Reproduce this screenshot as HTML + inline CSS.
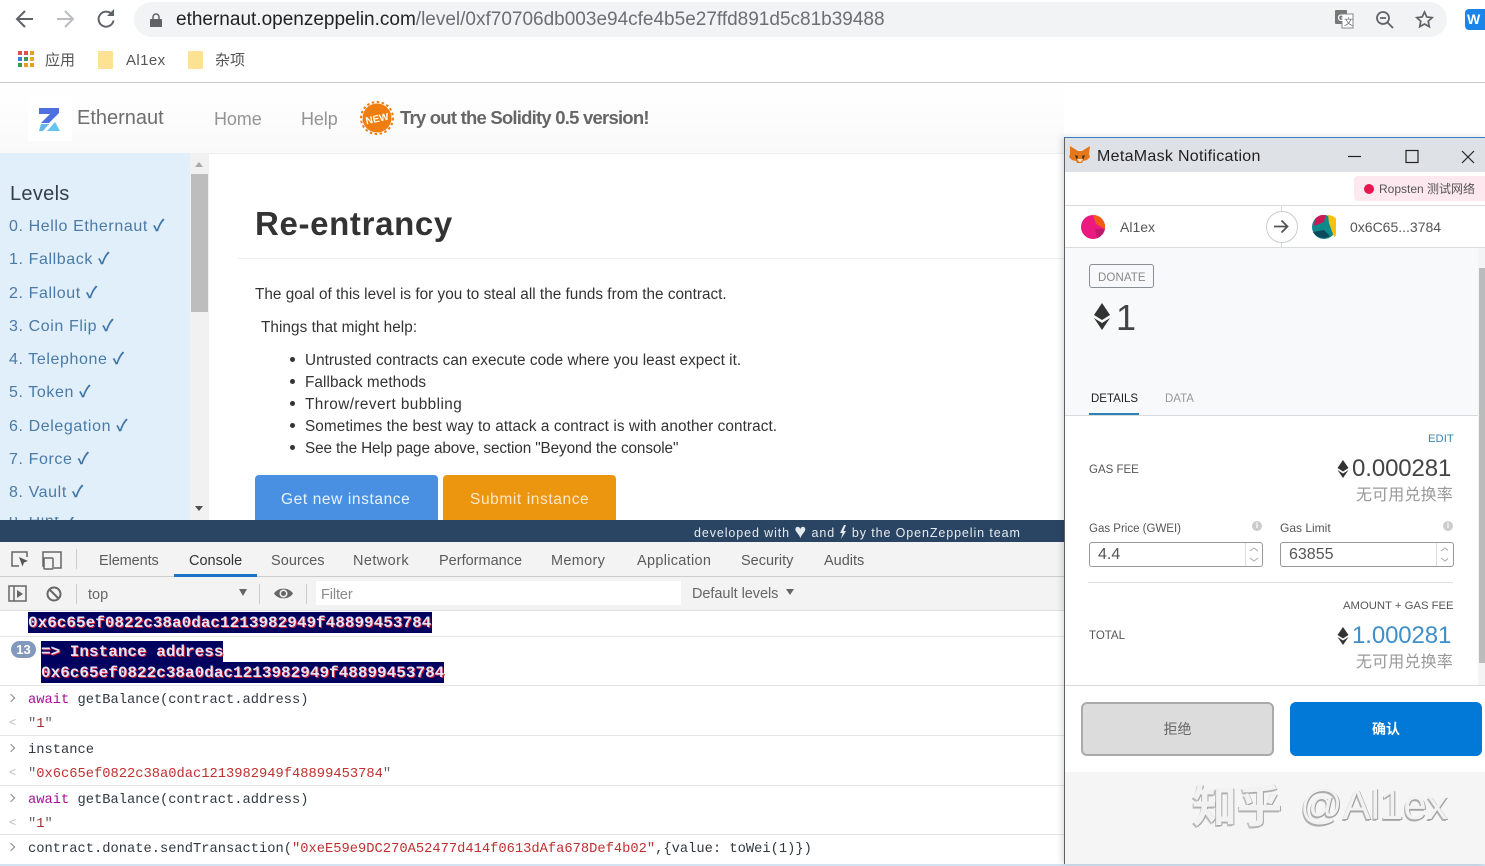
<!DOCTYPE html>
<html><head><meta charset="utf-8"><style>
html,body{margin:0;padding:0;width:1485px;height:866px;overflow:hidden;background:#fff}
body{position:relative;font-family:"Liberation Sans","Noto Sans CJK SC",sans-serif;color:#333}
.a,.t{position:absolute}
.t{white-space:nowrap;line-height:20px}
.m{font-family:"Liberation Mono","DejaVu Sans Mono",monospace;font-size:13.75px;color:#303942}
.lv{left:9px;font-size:16px;color:#4a7aa6;letter-spacing:.6px}
.lv i{font-style:normal;font-weight:bold;color:#3f74a6}
.b{left:255px;font-size:15.3px;color:#333;letter-spacing:.02px}
.tab{top:551px;font-size:14.5px;color:#5a5a5a}
.hl{background:#00005f;color:#e4e4f6;font-weight:bold;text-shadow:1px 1px 0 #d0203a;font-family:"Liberation Mono",monospace;font-size:16px;line-height:23px;height:21px;white-space:nowrap;position:absolute}
.line{position:absolute;height:1px;background:#e6e6e6;left:0;width:1064px}
.mm{font-size:11.5px;color:#555}
.ch{position:absolute;left:8px;width:5px;height:5px;border-top:1.5px solid #888;border-right:1.5px solid #888;transform:rotate(45deg)}
.bk{position:absolute;left:9px;font-size:12px;line-height:12px;color:#bbb;font-family:"Liberation Mono",monospace}
.inf{position:absolute;width:10px;height:10px;border-radius:5px;background:#ccc;color:#fff;font-size:8px;line-height:10px;text-align:center;font-weight:bold}
</style></head><body>

<!-- Chrome toolbar -->
<svg class="a" style="left:14px;top:8px" width="110" height="24" fill="none" stroke="#5f6368" stroke-width="2"><path d="M19 11H4M11 3l-8 8 8 8"/><path d="M43 11h15M51 3l8 8-8 8" stroke="#b9bcc0"/><path d="M98 6.500a7.500 7.500 0 1 0 1.500 6"/><path d="M93 8h7V1z" stroke="none" fill="#5f6368"/></svg>
<div class="a" style="left:134px;top:2px;width:1313px;height:35px;border-radius:18px;background:#f1f3f4"></div>
<svg class="a" style="left:149px;top:12px" width="14" height="16"><path d="M2 7h10a1 1 0 0 1 1 1v7H1V8a1 1 0 0 1 1-1z" fill="#5f6368"/><path d="M4 7V5a3 3 0 0 1 6 0v2" fill="none" stroke="#5f6368" stroke-width="1.5"/></svg>
<div class="t" style="left:176px;top:10px;font-size:19px;color:#222">ethernaut.openzeppelin.com<span style="color:#6b6f73">/level/0xf70706db003e94cfe4b5e27ffd891d5c81b39488</span></div>
<svg class="a" style="left:1334px;top:9px" width="22" height="22"><rect x="1" y="1" width="12" height="14" fill="#777" rx="1"/><rect x="8" y="5" width="11" height="14" fill="#fff" stroke="#888"/><text x="3.500" y="12" font-size="9" font-weight="bold" fill="#fff" font-family="Liberation Sans">G</text><text x="10" y="16" font-size="9" fill="#666" font-family="Noto Sans CJK SC">文</text></svg>
<svg class="a" style="left:1375px;top:10px" width="20" height="20" fill="none" stroke="#5f6368" stroke-width="1.8"><circle cx="8" cy="8" r="6"/><path d="M5 8h6M12.500 12.500l5.500 5.500"/></svg>
<svg class="a" style="left:1415px;top:10px" width="19" height="19" fill="none" stroke="#5f6368" stroke-width="1.7"><path d="M9.500 2l2.300 5 5.400.6-4 3.700 1.100 5.400-4.800-2.700-4.800 2.700 1.100-5.400-4-3.700 5.400-.6z"/></svg>
<div class="a" style="left:1465px;top:9px;width:20px;height:21px;background:#1a84e8;border-radius:4px 0 0 4px"></div>
<div class="t" style="left:1467px;top:9px;font-size:14px;font-weight:bold;color:#fff">W</div>

<!-- Bookmarks -->
<svg class="a" style="left:18px;top:51px" width="17" height="17"><g><rect x="0" y="0" width="4" height="4" fill="#d9534f"/><rect x="6" y="0" width="4" height="4" fill="#d9534f"/><rect x="12" y="0" width="4" height="4" fill="#e0a020"/><rect x="0" y="6" width="4" height="4" fill="#3c7de0"/><rect x="6" y="6" width="4" height="4" fill="#3c9a50"/><rect x="12" y="6" width="4" height="4" fill="#e0b020"/><rect x="0" y="12" width="4" height="4" fill="#3c9a50"/><rect x="6" y="12" width="4" height="4" fill="#e0a020"/><rect x="12" y="12" width="4" height="4" fill="#e0a020"/></g></svg>
<div class="t" style="left:45px;top:51px;font-size:15px;color:#555">应用</div>
<div class="a" style="left:98px;top:51px;width:15px;height:18px;background:#fde293;border-radius:1px"></div>
<div class="t" style="left:126px;top:51px;font-size:15px;color:#555;letter-spacing:.4px">Al1ex</div>
<div class="a" style="left:188px;top:51px;width:15px;height:18px;background:#fde293;border-radius:1px"></div>
<div class="t" style="left:215px;top:51px;font-size:15px;color:#555">杂项</div>
<div class="a" style="left:0;top:82px;width:1485px;height:1px;background:#c8c8c8"></div>

<!-- Page header -->
<div class="a" style="left:0;top:83px;width:1064px;height:70px;background:linear-gradient(#fff,#f9f9f9);border-bottom:1px solid #eee"></div>
<div class="a" style="left:28px;top:97px;width:44px;height:44px;background:#fff"></div>
<svg class="a" style="left:38px;top:107px" width="24" height="25"><path d="M1 1h20v5L11 16H3l9-9H1z" fill="#4e6fe0"/><path d="M3 17h8l-6 7H1z" fill="#63b7ef"/><path d="M9 24l8-9 5 9z" fill="#63c5ee"/></svg>
<div class="t" style="left:77px;top:108px;font-size:20px;color:#6e6e6e;letter-spacing:0">Ethernaut</div>
<div class="t" style="left:214px;top:109px;font-size:18px;color:#949494;letter-spacing:-.1px">Home</div>
<div class="t" style="left:301px;top:109px;font-size:18px;color:#949494;letter-spacing:-.1px">Help</div>
<svg class="a" style="left:360px;top:101px" width="34" height="34"><circle cx="17" cy="17" r="14.500" fill="#ef7d0f"/><circle cx="17" cy="17" r="16" fill="none" stroke="#ef7d0f" stroke-width="2" stroke-dasharray="2.500 2.500"/><text x="17" y="21" transform="rotate(-12 17 17)" text-anchor="middle" font-size="10" font-weight="bold" fill="#ffe" font-family="Liberation Sans">NEW</text></svg>
<div class="t" style="left:400px;top:108px;font-size:18.5px;font-weight:bold;color:#666;letter-spacing:-.78px">Try out the Solidity 0.5 version!</div>

<!-- Sidebar -->
<div class="a" style="left:0;top:153px;width:190px;height:367px;background:#e1effa"></div>
<div class="a" style="left:190px;top:153px;width:19px;height:367px;background:#f1f1f1"></div>
<div class="a" style="left:191px;top:174px;width:17px;height:138px;background:#bdbdbd"></div>
<div class="a" style="left:195px;top:162px;border:4.500px solid transparent;border-bottom:5px solid #aaa;border-top:0"></div>
<div class="a" style="left:195px;top:506px;border:4.500px solid transparent;border-top:5px solid #505050;border-bottom:0"></div>
<div class="t" style="left:10px;top:184px;font-size:20px;color:#34404c;letter-spacing:.3px">Levels</div>
<div class="t lv" style="top:217px">0. Hello Ethernaut <i>✓</i></div>
<div class="t lv" style="top:250px">1. Fallback <i>✓</i></div>
<div class="t lv" style="top:284px">2. Fallout <i>✓</i></div>
<div class="t lv" style="top:317px">3. Coin Flip <i>✓</i></div>
<div class="t lv" style="top:350px">4. Telephone <i>✓</i></div>
<div class="t lv" style="top:383px">5. Token <i>✓</i></div>
<div class="t lv" style="top:417px">6. Delegation <i>✓</i></div>
<div class="t lv" style="top:450px">7. Force <i>✓</i></div>
<div class="t lv" style="top:483px">8. Vault <i>✓</i></div>
<div class="t lv" style="top:517px;height:3px;overflow:hidden;line-height:10px">9. Hint <i>✓</i></div>

<!-- Main -->
<div class="t" style="left:255px;top:205px;font-size:33px;line-height:38px;font-weight:bold;color:#333;letter-spacing:.65px">Re-entrancy</div>
<div class="a" style="left:238px;top:258px;width:826px;height:1px;background:#eee"></div>
<div class="t b" style="top:285px">The goal of this level is for you to steal all the funds from the contract.</div>
<div class="t b" style="top:318px;left:261px;letter-spacing:.06px">Things that might help:</div>
<div class="a" style="left:290px;top:357px;width:5px;height:5px;border-radius:3px;background:#333;box-shadow:0 22px #333,0 44px #333,0 66px #333,0 88px #333"></div>
<div class="t b" style="top:351px;left:305px;letter-spacing:.04px">Untrusted contracts can execute code where you least expect it.</div>
<div class="t b" style="top:373px;left:305px;letter-spacing:.08px">Fallback methods</div>
<div class="t b" style="top:395px;left:305px;letter-spacing:.44px">Throw/revert bubbling</div>
<div class="t b" style="top:417px;left:305px;letter-spacing:.09px">Sometimes the best way to attack a contract is with another contract.</div>
<div class="t b" style="top:439px;left:305px;letter-spacing:-.11px">See the Help page above, section "Beyond the console"</div>
<div class="a" style="left:255px;top:475px;width:183px;height:45px;background:#4a90e2;border-radius:4px 4px 0 0"></div>
<div class="t" style="left:281px;top:490px;font-size:15.500px;color:#e8f2fc;letter-spacing:.6px">Get new instance</div>
<div class="a" style="left:443px;top:475px;width:173px;height:45px;background:#ec950f;border-radius:4px 4px 0 0"></div>
<div class="t" style="left:470px;top:490px;font-size:15.500px;color:#fde9c8;letter-spacing:.6px">Submit instance</div>

<!-- Footer bar -->
<div class="a" style="left:0;top:520px;width:1064px;height:22px;background:#2a4563"></div>
<div class="t" style="left:694px;top:523px;font-size:12.500px;color:#e6ebf0;letter-spacing:.9px">developed with <span style="font-size:20px;line-height:16px;vertical-align:-1px">♥</span> and <svg width="8" height="14" style="vertical-align:-2px"><path d="M5 0L1 8h2.500L2 14l5-8H4.500L7 0z" fill="#e6ebf0"/></svg> by the OpenZeppelin team</div>

<!-- Devtools -->
<div class="a" style="left:0;top:542px;width:1064px;height:68px;background:#f3f3f3"></div>
<div class="a" style="left:0;top:576px;width:1064px;height:1px;background:#ccc"></div>
<div class="a" style="left:0;top:610px;width:1064px;height:1px;background:#ddd"></div>
<svg class="a" style="left:10px;top:549px" width="55" height="22" fill="none" stroke="#666" stroke-width="1.500"><path d="M9 17H2V3h15v5"/><path d="M9 8l9 4-4 1.500-1.500 4z" fill="#555" stroke="none"/><path d="M34 17H33V3h18v16H44"/><rect x="34" y="9" width="9" height="11" rx="1"/></svg>
<div class="a" style="left:76px;top:549px;width:1px;height:20px;background:#ccc"></div>
<div class="t tab" style="left:99px;letter-spacing:-.1px">Elements</div>
<div class="t tab" style="left:189px;color:#333">Console</div>
<div class="a" style="left:174px;top:574px;width:83px;height:3px;background:#1a73c8"></div>
<div class="t tab" style="left:271px;letter-spacing:.05px">Sources</div>
<div class="t tab" style="left:353px;letter-spacing:.4px">Network</div>
<div class="t tab" style="left:439px">Performance</div>
<div class="t tab" style="left:551px;letter-spacing:.3px">Memory</div>
<div class="t tab" style="left:637px;letter-spacing:.3px">Application</div>
<div class="t tab" style="left:741px">Security</div>
<div class="t tab" style="left:824px">Audits</div>

<svg class="a" style="left:8px;top:584px" width="60" height="20" fill="none" stroke="#666" stroke-width="1.500"><rect x="1" y="2" width="17" height="15"/><path d="M6 2v15"/><path d="M9 6l6 4-6 4z" fill="#666" stroke="none"/><circle cx="46" cy="10" r="6.500" stroke-width="2"/><path d="M41 5l10 10" stroke-width="2"/></svg>
<div class="a" style="left:76px;top:584px;width:1px;height:20px;background:#ccc"></div>
<div class="t" style="left:88px;top:585px;font-size:14.500px;color:#666">top</div>
<div class="a" style="left:239px;top:589px;border:4.500px solid transparent;border-top:7px solid #666;border-bottom:0"></div>
<div class="a" style="left:259px;top:584px;width:1px;height:20px;background:#ccc"></div>
<svg class="a" style="left:273px;top:586px" width="22" height="15"><path d="M1 7.500C5 1 16 1 20 7.500 16 14 5 14 1 7.500z" fill="#666"/><circle cx="10.500" cy="7.500" r="4" fill="#f3f3f3"/><circle cx="10.500" cy="7.500" r="2.500" fill="#666"/></svg>
<div class="a" style="left:306px;top:584px;width:1px;height:20px;background:#ccc"></div>
<div class="a" style="left:316px;top:581px;width:365px;height:24px;background:#fff"></div>
<div class="t" style="left:321px;top:585px;font-size:14.500px;color:#8a8a8a;letter-spacing:-.1px">Filter</div>
<div class="t" style="left:692px;top:584px;font-size:14.500px;color:#666;letter-spacing:-.05px">Default levels</div>
<div class="a" style="left:786px;top:589px;border:4px solid transparent;border-top:6px solid #666;border-bottom:0"></div>

<!-- Console -->
<div class="hl" style="left:28px;top:612px;width:404px">0x6c65ef0822c38a0dac1213982949f48899453784</div>
<div class="line" style="top:636px"></div>
<div class="a" style="left:11px;top:641px;width:25px;height:17px;border-radius:9px;background:#8299bd;color:#fff;font-size:13px;line-height:17px;text-align:center;font-weight:bold">13</div>
<div class="hl" style="left:41px;top:641px">=&gt; Instance address</div>
<div class="hl" style="left:41px;top:662px">0x6c65ef0822c38a0dac1213982949f48899453784</div>
<div class="line" style="top:685px"></div>
<div class="ch" style="top:695px"></div>
<div class="t m" style="left:28px;top:691px"><span style="color:#aa0d91">await</span> getBalance(contract.address)</div>
<div class="bk" style="top:717px">&lt;</div>
<div class="t m" style="left:28px;top:715px"><span style="color:#666">"</span><span style="color:#a03030">1</span><span style="color:#666">"</span></div>
<div class="line" style="top:735px"></div>
<div class="ch" style="top:745px"></div>
<div class="t m" style="left:28px;top:741px">instance</div>
<div class="bk" style="top:767px">&lt;</div>
<div class="t m" style="left:28px;top:765px"><span style="color:#666">"</span><span style="color:#c03030">0x6c65ef0822c38a0dac1213982949f48899453784</span><span style="color:#666">"</span></div>
<div class="line" style="top:785px"></div>
<div class="ch" style="top:795px"></div>
<div class="t m" style="left:28px;top:791px"><span style="color:#aa0d91">await</span> getBalance(contract.address)</div>
<div class="bk" style="top:817px">&lt;</div>
<div class="t m" style="left:28px;top:815px"><span style="color:#666">"</span><span style="color:#a03030">1</span><span style="color:#666">"</span></div>
<div class="line" style="top:834px"></div>
<div class="ch" style="top:844px"></div>
<div class="t m" style="left:28px;top:840px">contract.donate.sendTransaction(<span style="color:#c03030">"0xeE59e9DC270A52477d414f0613dAfa678Def4b02"</span>,{value: toWei(1)})</div>
<div class="a" style="left:0;top:864px;width:1485px;height:2px;background:#d3e3f2"></div>

<!-- MetaMask window -->
<div class="a" style="left:1064px;top:137px;width:421px;height:727px;background:#fff;border-left:1px solid #5a6068;border-top:1px solid #3a7fc1;box-shadow:-2px 0 6px rgba(0,0,0,.15);box-sizing:border-box"></div>
<div class="a" style="left:1065px;top:138px;width:420px;height:34px;background:#dee1e6"></div>
<svg class="a" style="left:1069px;top:145px" width="22" height="18"><path d="M1 1l8 5h4l8-5-1 8 1 3-3 3-4 1-1 2H8l-1-2-4-1-3-3 1-3z" fill="#e4761b"/><path d="M6 10l3 1-1 4zM16 10l-3 1 1 4z" fill="#3a2a1a"/><path d="M8 14h6l-2 3h-2z" fill="#f2d9c2"/></svg>
<div class="t" style="left:1097px;top:147px;font-size:16px;color:#1f1f1f;letter-spacing:.3px">MetaMask Notification</div>
<svg class="a" style="left:1348px;top:149px" width="132" height="16" fill="none" stroke="#222" stroke-width="1.200"><path d="M0 7.500h13"/><rect x="58" y="1.500" width="12" height="12"/><path d="M114 2l12 12M126 2l-12 12"/></svg>

<div class="a" style="left:1354px;top:176px;width:131px;height:25px;background:#fce8ee;border-radius:4px 0 0 4px"></div>
<div class="a" style="left:1364px;top:184px;width:10px;height:10px;border-radius:5px;background:#e91550"></div>
<div class="t" style="left:1379px;top:179px;font-size:12px;color:#555">Ropsten 测试网络</div>
<div class="a" style="left:1065px;top:205px;width:420px;height:1px;background:#d8dcdf"></div>
<div class="a" style="left:1065px;top:247px;width:420px;height:1px;background:#d8dcdf"></div>
<svg class="a" style="left:1081px;top:215px" width="24" height="24"><circle cx="12" cy="12" r="12" fill="#ec1a80"/><path d="M12 0A12 12 0 0 1 24 14L15 9z" fill="#f05a14"/><path d="M24 14A12 12 0 0 1 16 23L14 14z" fill="#c0186c"/></svg>
<div class="t" style="left:1120px;top:217px;font-size:14px;color:#555">Al1ex</div>
<div class="a" style="left:1281px;top:205px;width:1px;height:42px;background:#d8dcdf"></div>
<div class="a" style="left:1266px;top:211px;width:30px;height:30px;border-radius:16px;border:1px solid #ccc;background:#fff"></div>
<svg class="a" style="left:1273px;top:218px" width="17" height="17" fill="none" stroke="#555" stroke-width="1.800"><path d="M1 8.500h13M8.500 2.500l6 6-6 6"/></svg>
<svg class="a" style="left:1312px;top:215px" width="24" height="24"><circle cx="12" cy="12" r="12" fill="#0f8a8a"/><path d="M16 0a12 12 0 0 1 6 22L17 8z" fill="#f5c211"/><path d="M3 4a12 12 0 0 1 11-4L12 7 2 11z" fill="#c81a55"/><path d="M1 17l11-2 6 6a12 12 0 0 1-17-4z" fill="#0b4a5a"/></svg>
<div class="t" style="left:1350px;top:217px;font-size:14px;color:#555">0x6C65...3784</div>

<div class="a" style="left:1065px;top:248px;width:413px;height:167px;background:#f8f9fa"></div>
<div class="a" style="left:1478px;top:248px;width:7px;height:437px;background:#f4f4f4"></div>
<div class="a" style="left:1479px;top:268px;width:6px;height:395px;background:#bbb"></div>
<div class="a" style="left:1065px;top:415px;width:413px;height:1px;background:#d8dcdf"></div>

<div class="a" style="left:1089px;top:264px;width:63px;height:22px;border:1px solid #8a8f94;border-radius:3px"></div>
<div class="t" style="left:1098px;top:268px;font-size:11.500px;color:#888;letter-spacing:.1px">DONATE</div>
<svg class="a" style="left:1093px;top:303px" width="18" height="27"><path d="M9 0l8 12-8 5-8-5z" fill="#333"/><path d="M1 15l8 5 8-5-8 12z" fill="#333"/></svg>
<div class="t" style="left:1116px;top:298px;font-size:36px;line-height:40px;color:#444">1</div>
<div class="t" style="left:1091px;top:389px;font-size:11.500px;color:#222">DETAILS</div>
<div class="t" style="left:1165px;top:389px;font-size:11.500px;color:#999">DATA</div>
<div class="a" style="left:1089px;top:413px;width:50px;height:2px;background:#2f82b8"></div>

<div class="t" style="left:1428px;top:429px;font-size:11.300px;color:#3d85b5">EDIT</div>
<div class="t mm" style="left:1089px;top:460px">GAS FEE</div>
<svg class="a" style="left:1337px;top:460px" width="12" height="18"><path d="M6 0l5.500 8-5.500 3.500L.5 8z" fill="#333"/><path d="M.5 10l5.500 3.500L11.500 10 6 18z" fill="#333"/></svg>
<div class="t" style="left:1352px;top:455px;font-size:24px;line-height:28px;color:#444;letter-spacing:-.1px">0.000281</div>
<div class="t" style="left:1356px;top:487px;font-size:16px;color:#999;letter-spacing:.15px;line-height:18px">无可用兑换率</div>
<div class="t mm" style="left:1089px;top:519px">Gas Price (GWEI)</div>
<div class="inf" style="left:1252px;top:521px">i</div>
<div class="t" style="left:1280px;top:518px;font-size:12px;color:#555">Gas Limit</div>
<div class="inf" style="left:1443px;top:521px">i</div>

<div class="a" style="left:1089px;top:542px;width:172px;height:23px;border:1px solid #999;border-radius:3px"></div>
<div class="a" style="left:1245px;top:543px;width:1px;height:23px;background:#ddd"></div>
<div class="t" style="left:1098px;top:545px;font-size:16px;color:#555">4.4</div>
<div class="a" style="left:1280px;top:542px;width:172px;height:23px;border:1px solid #999;border-radius:3px"></div>
<div class="a" style="left:1436px;top:543px;width:1px;height:23px;background:#ddd"></div>
<div class="t" style="left:1289px;top:545px;font-size:16px;color:#555">63855</div>
<svg class="a" style="left:1248px;top:545px" width="200" height="20" fill="none" stroke="#aaa" stroke-width="1"><path d="M2 6l4-3 4 3M2 13l4 3 4-3M193 6l4-3 4 3M193 13l4 3 4-3"/></svg>
<div class="a" style="left:1088px;top:582px;width:365px;height:1px;background:#ddd"></div>

<div class="t" style="left:1343px;top:596px;font-size:11.300px;color:#555">AMOUNT + GAS FEE</div>
<div class="t mm" style="left:1089px;top:626px">TOTAL</div>
<svg class="a" style="left:1337px;top:627px" width="12" height="18"><path d="M6 0l5.500 8-5.500 3.500L.5 8z" fill="#333"/><path d="M.5 10l5.500 3.500L11.500 10 6 18z" fill="#333"/></svg>
<div class="t" style="left:1352px;top:622px;font-size:24px;line-height:28px;color:#3f8fc8;letter-spacing:-.1px">1.000281</div>
<div class="t" style="left:1356px;top:654px;font-size:16px;color:#999;letter-spacing:.15px;line-height:18px">无可用兑换率</div>

<div class="a" style="left:1065px;top:685px;width:420px;height:1px;background:#d8dcdf"></div>
<div class="a" style="left:1081px;top:702px;width:193px;height:54px;box-sizing:border-box;background:#dcdcdc;border:2px solid #aaa;border-radius:6px;color:#666;font-size:14px;line-height:50px;text-align:center">拒绝</div>
<div class="a" style="left:1290px;top:702px;width:192px;height:54px;background:#0279d6;border-radius:6px;color:#fff;font-size:14px;line-height:54px;text-align:center;font-weight:bold">确认</div>
<div class="a" style="left:1065px;top:772px;width:420px;height:92px;background:#f5f5f5"></div>
<div class="t" style="left:1192px;top:781px;font-size:45px;line-height:52px;color:#f2f2f2;font-weight:bold;text-shadow:1px 1px 0 #a8a8a8,-1px 2px 0 #bbb">知乎</div>
<div class="t" style="left:1300px;top:781px;font-size:42px;line-height:48px;color:#f2f2f2;text-shadow:1px 1px 0 #a0a0a0,-1px 2px 0 #b0b0b0">@Al1ex</div>
</body></html>
